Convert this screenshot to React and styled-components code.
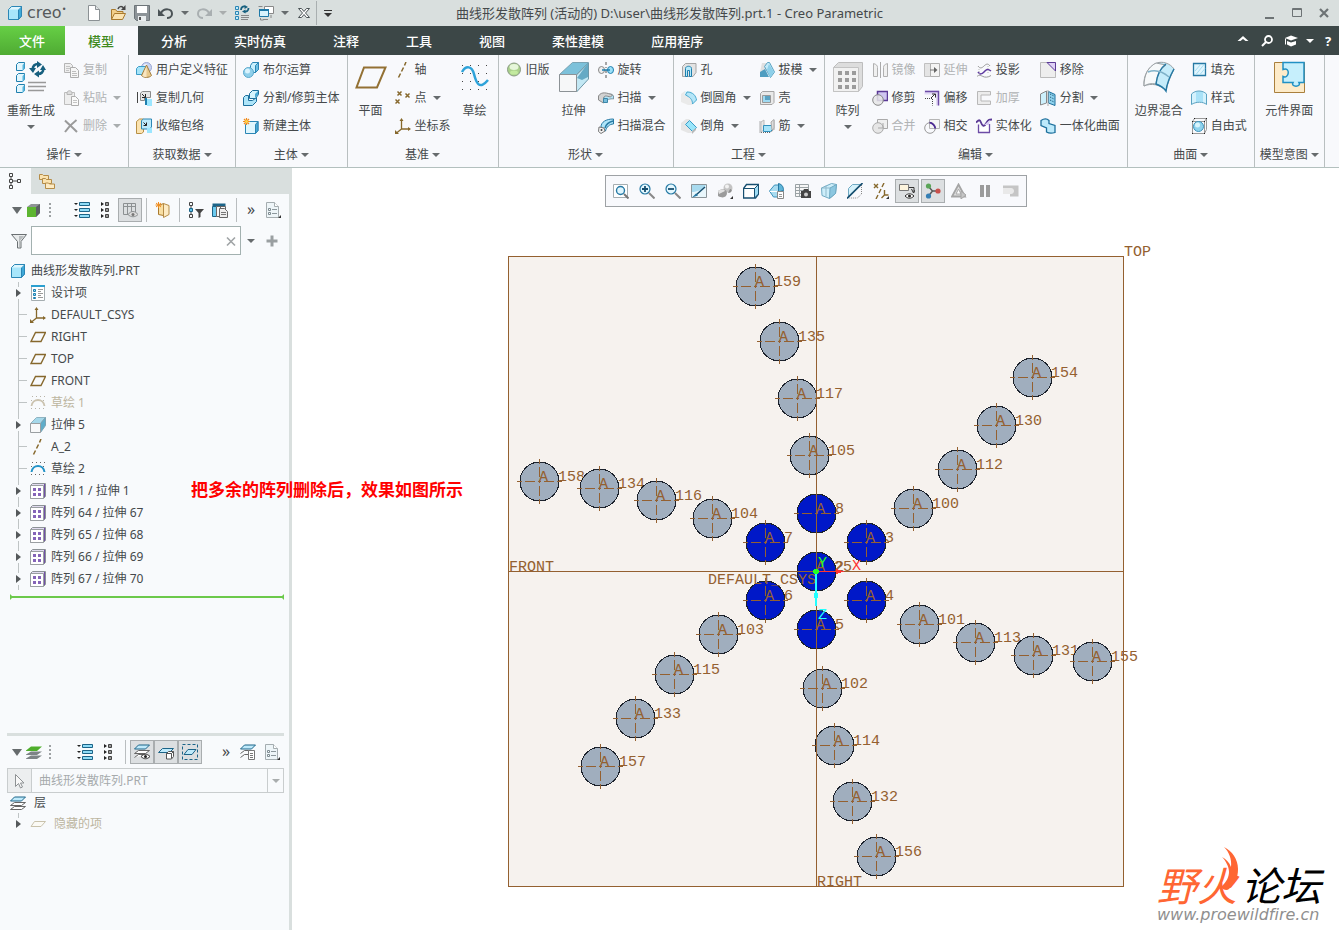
import React from 'react';
import styled, { createGlobalStyle } from 'styled-components';

const icons = {
    part: <><path d="M1.5 4.5l3-3h10v9.500l-3 3.500h-10z" fill="#a8e6fb" stroke="#2b86b5"/><path d="M11.500 4.500l3-3v9.500l-3 3.500z" fill="#3fa9d8" stroke="#2b86b5"/><path d="M2 4.500l3-2.500h9l-2.500 2.500z" fill="#dff6fe"/></>,
    newDoc: <><path d="M2.500 .5h7l4 4v11h-11z" fill="#fff" stroke="#8b9194"/><path d="M9.500 .5v4h4" fill="#dfe3e4" stroke="#8b9194"/></>,
    open: <><path d="M1.500 14.500v-10h4l1.500 2h6v3" fill="#f2cf8a" stroke="#a97a2e"/><path d="M1.500 14.500l3-6h11l-3 6z" fill="#fbe3b0" stroke="#a97a2e"/><path d="M8 4c1-3 4-3 5.500-1" fill="none" stroke="#444" strokeWidth="1.500"/><path d="M15.500 0v5h-4.500z" fill="#444"/></>,
    save: <><path d="M.5 .5h15v15h-13l-2-2z" fill="#8d9498" stroke="#6c7478"/><path d="M3 1h10v7h-10z" fill="#fff"/><path d="M4 11h8v5h-8z" fill="#e9edee"/><path d="M5 12h2v3h-2z" fill="#555"/></>,
    undo: <><path d="M3 8c3-5 11-5 11 1c0 3-3 4-5 4" fill="none" stroke="#4b5356" strokeWidth="2"/><path d="M0 4v7h7z" fill="#4b5356"/></>,
    redo: <><path d="M13 8c-3-5-11-5-11 1c0 3 3 4 5 4" fill="none" stroke="#a9afb1" strokeWidth="2"/><path d="M16 4v7h-7z" fill="#a9afb1"/></>,
    regenSmall: <><path d="M1.500 1.500h3v3h-3zM1.500 6.500h3v3h-3zM1.500 11.500h3v3h-3z" fill="#bfeafb" stroke="#2b86b5"/><path d="M7 10.500h8M7 12.500h8M7 14.500h7" stroke="#888"/><path d="M7 5c0-3 2-4 4-3.500M14.500 3c0 3-2 4-4 3.500" fill="none" stroke="#17607f" strokeWidth="1.800"/><path d="M10.500 0l3.500 2-3.500 2zM11.500 4.500l-3.500 2 3.500 2z" fill="#17607f"/></>,
    windows: <><path d="M6.500 1.500h9v7h-9z" fill="#fff" stroke="#888"/><path d="M1.500 4.500h9v7h-9z" fill="#d8f3fd" stroke="#1f79a8"/><path d="M1 4h10v2h-10z" fill="#1f79a8"/><path d="M5 14.500h5M13 10v3M.5 1.500h4M2.500 13v2h3" stroke="#888" fill="none"/></>,
    closeWin: <path d="M2.500 3.500h3l2.500 3 2.500-3h3l-4 4.500 4 4.500h-3l-2.500-3-2.500 3h-3l4-4.500z" fill="#fff" stroke="#4b5356"/>,
    min: <path d="M3 12h9v2h-9z" fill="#6d7375"/>,
    max: <path d="M3.500 3.500h9v8h-9zM3 4.500h10" fill="none" stroke="#6d7375"/>,
    close: <path d="M4 4l8 8M12 4l-8 8" stroke="#6d7375" strokeWidth="2.200"/>,
    chevronUp: <path d="M8 3l5.500 5h-3l-2.500-2-2.500 2h-3z" fill="#fff"/>,
    search: <><circle cx="9.500" cy="6.500" r="3.500" fill="none" stroke="#fff" strokeWidth="1.800"/><path d="M7 9l-4 4" stroke="#fff" strokeWidth="2"/></>,
    learn: <><path d="M8 2.500l7 2.500-7 2.500-6-2.500z" fill="#fff"/><path d="M4 8l4 1.500 5-1.500v3.500l-5 2-4-2z" fill="#fff"/><path d="M2.500 5.500v6" stroke="#fff"/></>,

    copy: <><path d="M1.500 1.500h6l2 2v7h-8z" fill="#efefef" stroke="#b5b5b5"/><path d="M3 4.500h4M3 6.500h4M3 8.500h3" stroke="#c4c4c4"/><path d="M7.500 5.500h5l3 3v7h-8z" fill="#f6f6f6" stroke="#adadad"/><path d="M9 9.500h4M9 11.500h5M9 13.500h5" stroke="#bdbdbd"/></>,
    paste: <><path d="M1.500 2.500h10v12h-10z" fill="#eee" stroke="#bdbdbd"/><path d="M4 3c0-3 5-3 5 0v1.500h-5z" fill="#ddd" stroke="#b5b5b5"/><path d="M8.500 6.500h4l3 3v6h-7z" fill="#fafafa" stroke="#adadad"/><path d="M10 10.500h4M10 12.500h4" stroke="#c4c4c4"/></>,
    del: <path d="M2 2.500c3 3 7 6.500 12 11.500M13.500 2c-4 3-8 7-11.500 12" stroke="#9a9a9a" strokeWidth="2" fill="none"/>,
    udf: <><circle cx="10.500" cy="5.500" r="5" fill="#c9d4f2" stroke="#98a5d2"/><circle cx="9.500" cy="4" r="2" fill="#eef2fc"/><path d="M.5 6.500l2-2h7v6l-2 2h-7z" fill="#a5e4f9" stroke="#3c9cc8"/><path d="M10.500 3l5 10.500c-2 2.500-8 2.500-10 0z" fill="#e8c98c" stroke="#a07c3e"/><path d="M10.500 4l0 11c-2 0-3.500 0-4-1.500z" fill="#f8e6c2"/></>,
    copyGeom: <><path d="M1.500 2v11" stroke="#444"/><path d="M4.500 3l2-1.500h8v6h-6v3h-4z" fill="#e6e6e6" stroke="#8a8a8a"/><path d="M6 4l2.500 2.500M9.500 4v3.500h-3.500" stroke="#222" fill="none"/><path d="M9 8h2v7h-2z" fill="#1c7fae"/><path d="M11 9h5v7h-5z" fill="#9be6ff"/></>,
    shrink: <><path d="M.5 3.500l3-2.500h4v13l-2 1.500h-5z" fill="#fbe3b0" stroke="#b78f45"/><path d="M5.500 2.500l2-1.500h8v8l-2 2h-8z" fill="#bdeafb" stroke="#2b86b5"/><path d="M7.500 4.500l3 3M10.500 4.500v3h-3" stroke="#222" fill="none"/><path d="M11 10h5v5h-5z" fill="#9be6ff"/></>,
    boole: <><path d="M7.500 3.500l2-3h6v7l-3 3h-5z" fill="#c9f0fd" stroke="#2b86b5"/><path d="M12.500 3.500l3-3v7l-3 3z" fill="#6fc0e2" stroke="#2b86b5"/><circle cx="5.500" cy="10.500" r="5" fill="#8fcfea" stroke="#5aa9cc"/><circle cx="4.500" cy="9" r="2.500" fill="#d9f3fd"/></>,
    splitBody: <><path d="M.5 7.500l2-2h3v5h4l4-3v4l-4 4h-9z" fill="#aee5f9" stroke="#1c6f9c"/><path d="M6.500 3.500l3-3h6v4l-3 4h-6z" fill="#d5f3fd" stroke="#1c6f9c"/><path d="M12 4l3-3v3.500l-3 3.500z" fill="#4aa9d4"/></>,
    newBody: <><path d="M2.500 6.500l3-3h9.500v9l-2.500 3h-10z" fill="#dff6fe" stroke="#2b86b5"/><path d="M12.500 6.500l2.500-3v9l-2.500 3z" fill="#4aa9d4" stroke="#2b86b5"/><path d="M3.500 0v7M0 3.500h7M1 1l5 5M6 1l-5 5" stroke="#f08c1e" strokeWidth="1.200"/><circle cx="3.500" cy="3.500" r="1.500" fill="#ffd54a"/></>,
    axis: <path d="M11 0l-1.500 3.500M8.500 5.500l-2 4M5.500 11.500l-2 4" stroke="#86682c" strokeWidth="1.500"/>,
    point: <path d="M2.500 1.500l4 4M6.500 1.500l-4 4M10.500 3.500l4 4M14.500 3.500l-4 4M.5 9.500l4 4M4.500 9.500l-4 4" stroke="#86682c" strokeWidth="1.500"/>,
    csys: <><path d="M6.500 2v9h8M6.500 11l-5 4" fill="none" stroke="#86682c" strokeWidth="1.300"/><path d="M4.500 3l2-3 2 3zM13 9l3 2-3 2zM0 12v4h4z" fill="#86682c"/></>,
    oldVersion: <><circle cx="8" cy="7.500" r="6.500" fill="#a9d08a" stroke="#8b9b85"/><ellipse cx="8" cy="5" rx="4.500" ry="3" fill="#e6f6da"/><ellipse cx="8" cy="10.500" rx="4" ry="2" fill="#c3ea9f"/></>,
    revolve: <><path d="M8 0v3M8 5v1M8 8v3M8 13v3" stroke="#555"/><ellipse cx="3.500" cy="8" rx="3" ry="3.500" fill="#eee" stroke="#888"/><ellipse cx="12.500" cy="8" rx="3" ry="3.500" fill="#9be0f8" stroke="#1f7fae"/><path d="M4 8h8" stroke="#1f7fae" strokeWidth="1.500"/></>,
    sweep: <><path d="M6 9c3 2 6-1 9.500 0v-3l-2-2c-4 0-6 1-8 1z" fill="#b5e4f6" stroke="#7d97a4"/><path d="M.5 6c3-5 9-3 14-1l-2 2c-4-1-6-2-7 1v5l-5-3z" fill="#d2d2d2" stroke="#8a8a8a"/><path d="M5.500 8.500h4v4h-4z" fill="#78bddb" stroke="#3b86a8"/></>,
    sweepBlend: <><path d="M3 9c0-5 5-8 12.500-8v5c-4 0-7 3-8 7z" fill="#aee5f9" stroke="#2679a4"/><path d="M7 10c1-4 4-6 8-7" stroke="#2679a4" fill="none" strokeWidth="1.500"/><path d="M1 9l5 1 1 3-4 2.500-2.500-2z" fill="#f4f4f4" stroke="#777"/><circle cx="3.500" cy="12" r="1" fill="#444"/></>,
    hole: <><path d="M1.500 4.500l3-3h10.500v9l-3 4h-10.500z" fill="#e3e3e3" stroke="#a5a5a5"/><path d="M4.500 14.500v-8c0-3 6-3 6 0v8h-2v-6h-2v6z" fill="#b5eafb" stroke="#1f7fae"/></>,
    round: <><path d="M0 4l4-3h4c5 1 8 6 7 10l-4 4h-4l-7-3z" fill="#eaeaea"/><path d="M4 1h4c5 1 8 5 7.500 10l-4 3.500c0-5-3-8-8-9z" fill="#e2f5fc"/><path d="M6 2c6 0 9 4 9.500 8l-4 4c0-5-3-7-7-9z" fill="#b5e6f8" stroke="#4ba9d0"/></>,
    chamfer: <><path d="M0 5l5-4h3l8 9-5 5h-4l-7-3z" fill="#e6e6e6"/><path d="M8.500 2.500l7 7-4 4-7-7z" fill="#9be6fb" stroke="#3a9cc8"/><path d="M11 13v3l4-4v-2z" fill="#b9b9b9"/></>,
    draft: <><path d="M3 1h5l-2 9h-5z" fill="#e0e0e0"/><path d="M5.500 4.500l3-4h2l5 9.500-4 5.500z" fill="#c5ebf9" stroke="#5aa2c2"/><path d="M10 2l5 8-4 5.500-3-8z" fill="#8dcfe9"/><path d="M1 10l5-3 4 8h-9z" fill="#4f9dc0"/></>,
    shell: <><path d="M1.500 3.500l2-2h11.500v11l-2 2h-11.500z" fill="#e9e9e9" stroke="#a5a5a5"/><path d="M3.500 5.500h8v7h-8z" fill="#9fdaf2" stroke="#999"/><path d="M6 6h5v4h-5z" fill="#5aa2c2"/></>,
    rib: <><path d="M1 3.500v11h10l4-3v-10" fill="none" stroke="#666" strokeDasharray="1 1"/><path d="M2 4l3-2v10l-3 2z" fill="#e8e8e8" stroke="#bbb"/><path d="M4.500 7.500h8l1-1v5l-2 2h-7z" fill="#a6e4fa" stroke="#3190bd"/><path d="M12 4l3-2.500v9l-2 1.500z" fill="#ddd" stroke="#aaa"/></>,
    mirror: <><path d="M8.500 0v16" stroke="#aaa"/><path d="M1.500 1.500c3 1 4 2 4 4v9h-4zM15.500 1.500c-3 1-4 2-4 4v9h4z" fill="#f0f0f0" stroke="#b0b0b0"/></>,
    extend: <><path d="M.5 1.500h6v13h-6z" fill="#e4e4e4" stroke="#c0c0c0"/><path d="M6.500 1.500h9v13h-9z" fill="#f4f4f4" stroke="#b0b0b0"/><path d="M6 8h6" stroke="#777"/><path d="M10 5l3.500 3-3.500 3z" fill="#666"/></>,
    project: <><path d="M2 4c2 3 4 2 6 0s4-3 6 0M1 14.500c2-2 4-1 6 0s5 1 8-1" fill="none" stroke="#999"/><path d="M2 10c2 3 4 2 6 0s3-4 7-1" fill="none" stroke="#5e3aa0" strokeWidth="1.500"/><path d="M3 7v7M12 4v8" stroke="#b8b8b8" strokeDasharray="1 1"/></>,
    trim: <><path d="M5.500 1.500h10v9h-10z" fill="#cfc6f0" stroke="#5b3a96" strokeWidth="1.500"/><circle cx="6" cy="10" r="5.300" fill="#e6e6e6" fillOpacity=".85" stroke="#888"/></>,
    offset: <><path d="M.5 .5h14.500v15h-3v-11h-11.500z" fill="#e2d9f5"/><path d="M1 1.500h13.500v14" fill="none" stroke="#6c4ba6" strokeWidth="1.500"/><path d="M1 8.500h7.500v7" fill="none" stroke="#444" strokeDasharray="1 1"/><path d="M7 8l4-4M8 4h3.500v3.500" stroke="#333" fill="none"/></>,
    thicken: <path d="M14.500 1.500h-13v13h13v-3.500h-9.500v-6h9.500z" fill="#ececec" stroke="#b8b8b8"/>,
    merge: <><path d="M5.500 1.500h10v9h-10z" fill="#efefef" stroke="#aaa"/><circle cx="6" cy="10" r="5.300" fill="#e6e6e6" stroke="#aaa"/><path d="M6 10h5v-5" fill="none" stroke="#aaa"/></>,
    intersect: <><path d="M5.500 1.500h10v9h-10z" fill="#f5f5f5" stroke="#b5b5b5"/><circle cx="6" cy="10" r="5.300" fill="none" stroke="#999"/><path d="M5.500 4.700c3 0 5.500 3 5.800 5.800" fill="none" stroke="#4c2a94" strokeWidth="1.800"/></>,
    solidify: <><path d="M2.500 7.500c3 2 5 3 6 1l5-5v11h-11z" fill="#fff"/><path d="M2.500 15v-8.500M2 14.500h12M13.500 15v-9" stroke="#6c4ba6" strokeWidth="1.300"/><path d="M0 4.500c3-3 4-3 5 0s3 5 5 1 3-4 6-4" fill="none" stroke="#5b3a96" strokeWidth="1.800"/><path d="M8 7l6-5-1 5z" fill="#d8ccf2"/></>,
    remove: <><path d="M.5 .5h15v15h-15z" fill="#eee" stroke="#bbb"/><path d="M7 .5h8.500v8.500z" fill="#ddd0f5" stroke="#5b3a96"/></>,
    split: <><path d="M.5 4l6-3v12l-6 2z" fill="#cdf0fc" stroke="#888"/><path d="M8.500 1.500l6.500 3v11l-6.500-2.500z" fill="#8fd3ee" stroke="#1c6f9c"/><path d="M10 4l4 2M10 7l4 2M10 10l4 2" stroke="#164f70" strokeDasharray="1 1"/><path d="M8 0v16" stroke="#aaa"/></>,
    unify: <path d="M1 2.500c3-2 6-2 8 0v3l6 2v7c-3 1-6 1-8.500-.5v-4l-5.500-2.500z" fill="#bdeafb" stroke="#1c6f9c" strokeWidth="1.300"/>,
    fill: <><path d="M2.500 1.500h12v12h-12z" fill="#e1f6fe" stroke="#2679a4" strokeWidth="1.300"/><path d="M4 9l6-7M5 12.500l8-10M9 12.500l5-6" stroke="#a5dcf2"/></>,
    style: <><path d="M.5 4c4-4 11-4 15 0v11c-2-3-5-3-7-3s-5 0-8 3z" fill="#d5f2fd"/><path d="M5 2c2-1 5-1 7 .5v10c-2-1-5-1-7 0z" fill="#a9e2f8"/><path d="M.5 14.500v-10.500c4-4 11-4 15 0v10.500c-3-3-11-3-15 0z" fill="none" stroke="#5aa2c2"/></>,
    freestyle: <><path d="M1.500 3.500l2-3h12v11l-2 4h-12zM1.500 3.500h12v12M13.500 3.500l2-3" fill="none" stroke="#999"/><circle cx="7.500" cy="8.500" r="5" fill="#8fd3ee" stroke="#3c92bb"/><circle cx="6.500" cy="7" r="2.500" fill="#d8f4fd"/><path d="M1 3h1v1h-1zM13 3h1v1h-1zM1 15h1v1h-1zM13 15h1v1h-1zM3 0h1v1h-1zM15 0h1v1h-1z" fill="#222"/></>,

    modelTree: <path d="M1.500 .5h3v3h-3zM1.500 6.500h3v3h-3zM1.500 12.500h3v3h-3zM3 4v2M3 10v2M5 8h4M9.500 6.500h3v3h-3z" fill="none" stroke="#444"/>,
    folders: <><path d="M.5 1.500h3l1 1h5v4h-9z" fill="#fbe3b0" stroke="#b58c48"/><path d="M3.500 5.500h3l1 1h5v4h-9z" fill="#fbe3b0" stroke="#b58c48"/><path d="M6.500 10h3l1 1h5v4.500h-9z" fill="#fdebc4" stroke="#b58c48"/></>,
    greenCube: <><path d="M1 5l4-3h9v9l-4 4h-9z" fill="#8f9396"/><path d="M10 5l4-3v9l-4 4z" fill="#5b6063"/><path d="M1 5h9v10h-9z" fill="#5db531"/></>,
    greenLayers: <><path d="M0 14.500l5-3h11l-5 3.500h-11zM0 10.500l5-3h11l-5 3.500h-11z" fill="#7d8386"/><path d="M0 6.500l5-4h11l-5 4.500h-11z" fill="#4fae2c"/></>,
    dots: <path d="M7 1h2v2h-2zM7 5h2v2h-2zM7 9h2v2h-2zM7 13h2v2h-2z" fill="#9da1a3"/>,
    expandList: <><path d="M5.500 .5h10v3h-10zM5.500 6.500h10v3h-10zM5.500 12.500h10v3h-10z" fill="#8fdcf7" stroke="#1c6488"/><path d="M0 1h4l-2 2zM0 7h4l-2 2zM0 13h4l-2 2z" fill="#222"/></>,
    collapseList: <><path d="M7.500 .5h3v3h-3zM7.500 6.500h3v3h-3zM7.500 12.500h3v3h-3z" fill="#999" stroke="#444"/><path d="M3 0l3 2-3 2zM3 6l3 2-3 2zM3 12l3 2-3 2z" fill="#222"/></>,
    columnsEye: <><path d="M1.500 1.500h12v11h-12zM1 4.500h12M5.500 2v11M9.500 2v8" fill="none" stroke="#8c9092"/><path d="M6 12.500c3-4 7-4 10 0c-3 3-7 3-10 0z" fill="#ddd" stroke="#8c9092"/><circle cx="11" cy="12.500" r="1.500" fill="#777"/></>,
    newFolder: <><path d="M3.500 3.500l5-2v12l-5-1z" fill="#f8dfa4" stroke="#a97a2e"/><path d="M8.500 1.500l5.500 2v9l-5.500 3z" fill="#fdebc4" stroke="#b58c48"/><path d="M3.500 0v6M.5 3h6M1 1l5 4M6 1l-5 4" stroke="#f08c1e"/></>,
    treeFilter: <><path d="M1.500 .5h3v3h-3zM1.500 12.500h3v3h-3zM3 4v2M3 10v2" fill="none" stroke="#444"/><path d="M1.500 6.500h3v3h-3z" fill="#5cc3ea" stroke="#1c6488"/><path d="M7 7h9l-3.500 4v4l-2 1v-5z" fill="#444"/></>,
    columnsDoc: <><path d="M.5 1.500h13v3h-13z" fill="#1c6488"/><path d="M.5 4.500h4v10h-4z" fill="#6ccaee" stroke="#1c6488"/><path d="M4.500 4.500h9v10h-9zM8.500 5v9" fill="#f8f8f8" stroke="#666"/><path d="M7.500 6.500h5l3 3v6h-8z" fill="#eee" stroke="#666"/><path d="M9 10.500h5M9 12.500h5" stroke="#777"/></>,
    settingsDoc: <><path d="M1.500 .5h8l4 4v11h-12z" fill="#eef5f8" stroke="#a5adb0"/><path d="M9.500 .5v4h4" fill="#fff" stroke="#a5adb0"/><path d="M3.500 6.500h2v2h-2zM3.500 10.500h2v2h-2z" fill="#fff" stroke="#7d8a90"/><path d="M7 7.500h5M7 11.500h5" stroke="#8c979c"/><path d="M16 13v3h-3z" fill="#333"/></>,
    funnel: <><path d="M.5 1.500h15l-5.500 7v6.500h-3.500v-6.500z" fill="#e9ebec" stroke="#6b7073"/><path d="M8 3h5l-4 5v6h-1z" fill="#b9bdbf"/></>,
    plus: <path d="M6.500 2.500h3v4h4v3h-4v4h-3v-4h-4v-3h4z" fill="#9a9fa1"/>,
    clear: <path d="M4 4.500l8 8M12 4.500l-8 8" stroke="#a0a4a6" strokeWidth="1.600"/>,
    design: <><path d="M1.500 .5h13v15h-13z" fill="#fff" stroke="#a5adb0"/><path d="M1 1h14" stroke="#2b9fd0" strokeWidth="2"/><path d="M3.500 4.500h2v2h-2zM3.500 8.500h2v2h-2zM3.500 12.500h2v1h-2z" fill="#8fdcf7" stroke="#1f7fae"/><path d="M8 4.500h5M8 6.500h3M8 8.500h5M8 10.500h3M8 12.500h5" stroke="#999"/></>,
    plane: <path d="M5.500 3.500h10l-4.500 9h-10z" fill="none" stroke="#86682c" strokeWidth="1.400"/>,
    sketchOff: <><path d="M2 1.500h14M1 5.500h2M13 5.500h2M1 13.500h14" stroke="#b9b4a8" strokeDasharray="1 3"/><path d="M1.500 11c1-8 12-8 13 0" fill="none" stroke="#cbc3b0" strokeWidth="1.800"/></>,
    sketch: <><path d="M2 1.500h14M1 5.500h2M13 5.500h2M1 13.500h14" stroke="#666" strokeDasharray="1 3"/><path d="M1.500 11c1-8 12-8 13 0" fill="none" stroke="#2393c8" strokeWidth="2"/></>,
    extrude: <><path d="M.5 6.500l6-6h9l-5 6z" fill="#a5d8ea" stroke="#8fb3c1"/><path d="M10.500 6.500l5-6v8l-5 7z" fill="#5fadca" stroke="#7aa3b3"/><path d="M.5 6.500h10v9h-10z" fill="#f8f9fa" stroke="#9a9fa2"/></>,
    pattern: <><path d="M.5 2.500l2-2h13v13l-2 2h-13z" fill="#e2dcf0" stroke="#8c9296"/><path d="M.5 2.500h13v13h-13z" fill="#fff" stroke="#9a9fa2"/><path d="M14.500 1v13" stroke="#7350a8"/><path d="M3 5h3v3h-3zM8 5h3v3h-3zM3 10h3v3h-3zM8 10h3v3h-3z" fill="#8564b8"/></>,
    cursor: <path d="M4.500 1.500v12l3-3 2 4.500 2-1-2-4h3.500z" fill="#f8f8f8" stroke="#8d9193"/>,
    layers: <><path d="M.5 14.500l4-3h11l-4 3zM.5 10.500l4-3h11l-4 3z" fill="#fff" stroke="#666"/><path d="M.5 6l4-4h11l-4 4z" fill="#bfeafb" stroke="#1c6488"/></>,
    layerEye: <><path d="M.5 13.500l4-3h7M.5 9.500l4-3h11l-4 3z" fill="#fff" stroke="#666"/><path d="M.5 5l4-4h11l-4 4z" fill="#bfeafb" stroke="#1c6488"/><path d="M7 12.500c3-3 6-3 9 0c-3 3-6 3-9 0z" fill="#fff" stroke="#333"/><circle cx="11.500" cy="12.500" r="1.500" fill="#222"/></>,
    layerCube: <><path d="M.5 8.500l4-4h11l-4 4z" fill="#bfeafb" stroke="#1c6488"/><path d="M8.500 9.500l2-2h5v5l-2 2.500h-5zM8.500 9.500h5v5M13.500 9.500l2-2" fill="#fff" stroke="#555"/></>,
    layerSel: <><path d="M.5 .5h15v15h-15z" fill="none" stroke="#1c6488" strokeDasharray="3 2"/><path d="M2 10.500l4-5h8l-4 5z" fill="#bfeafb" stroke="#1c6488"/></>,
    layerDoc: <><path d="M.5 13.500l4-3h4M.5 9.500l4-3h5" fill="none" stroke="#666"/><path d="M.5 5l4-4h11l-4 4z" fill="#bfeafb" stroke="#1c6488"/><path d="M8.500 6.500h6v9h-6z" fill="#fff" stroke="#777"/><path d="M10 9.500h3M10 11.500h3M10 13.500h3" stroke="#777"/></>,
    planeOff: <path d="M4.500 5.500h11l-4.500 5h-10z" fill="#fbfaf5" stroke="#c9c2ac"/>,

    refit: <><path d="M.5 1.500h14v13h-14z" fill="#fff" stroke="#a5adb0"/><circle cx="7.500" cy="7.500" r="4" fill="#dff5fd" stroke="#2679a4" strokeWidth="1.400"/><path d="M11 11l4.500 4.500" stroke="#777" strokeWidth="2"/></>,
    zoomIn: <><circle cx="6" cy="6" r="5" fill="#e4f7fe" stroke="#2679a4" strokeWidth="1.200"/><path d="M3 6h6M6 3v6" stroke="#174f70" strokeWidth="1.800"/><path d="M10 10l5.500 5.500" stroke="#888" strokeWidth="2"/></>,
    zoomOut: <><circle cx="6" cy="6" r="5" fill="#e4f7fe" stroke="#2679a4" strokeWidth="1.200"/><path d="M3 6h6" stroke="#174f70" strokeWidth="1.800"/><path d="M10 10l5.500 5.500" stroke="#888" strokeWidth="2"/></>,
    repaint: <><path d="M.5 1.500h15v13h-15z" fill="#a9dbef" stroke="#8b9498"/><path d="M1 9c5 0 10-2 14-7v12h-14z" fill="#e9f7fc"/><path d="M5 12l9-8" stroke="#174f70" strokeWidth="1.500"/><path d="M1 14.500l4-4 2 2z" fill="#2679a4"/></>,
    shading: <><circle cx="11" cy="5" r="4.500" fill="#c4c4c4"/><circle cx="10" cy="3.500" r="2" fill="#f2f2f2"/><path d="M13 6c3 0 2 4-2 4l1-2z" fill="#8e8e8e"/><path d="M1 8c4-3 9-2 9 2s-4 6-9 3z" fill="#9b9b9b"/><path d="M1 8c3-2 6-2 7 0l-6 3z" fill="#e2e2e2"/><path d="M16 13v3h-3z" fill="#333"/></>,
    savedView: <><path d="M.5 5.500l3-4h12v9.500l-3 4h-12z" fill="#fff" stroke="#174f70" strokeWidth="1.400"/><path d="M11.500 5.500l4-4v9.500l-4 4z" fill="#9fdcf4" stroke="#174f70"/><path d="M.5 5.500h11v9" fill="none" stroke="#174f70"/></>,
    viewMgr: <><path d="M.5 8l5-6h4v6h5l-4 6h-6z" fill="#a9dcf0" stroke="#3c92bb"/><path d="M9.500 9v-8.500c4 1 5 4 5 7z" fill="#5fb5d8" stroke="#2679a4"/><path d="M1 8.500h8" stroke="#fff"/><path d="M8.500 8.500h6v7h-6z" fill="#fff" stroke="#888"/><path d="M10 11.500h3M10 13.500h3" stroke="#999"/></>,
    snapshot: <><path d="M.5 1.500h13v12h-13zM.5 4.500h13M.5 7.500h13M.5 10.500h13M4.500 2v11" fill="#f6f6f6" stroke="#9aa2a5"/><path d="M6 8h2l1-2h4l1 2h2v7h-10z" fill="#444"/><circle cx="11" cy="11.500" r="2" fill="#ccc"/></>,
    perspective: <><path d="M.5 5l10-4.500 5 1-1 9-6 5-7.500-3z" fill="#cdeefa" stroke="#6fa9c2"/><path d="M9 5l6.500-3.500-1 9-6 5z" fill="#8cc7e0" stroke="#6fa9c2"/><path d="M.5 5h8.500M5 2.500v11" stroke="#8fb9cb"/></>,
    section: <><path d="M1.500 5.500l4-4h9l-13 13z" fill="#d5f1fb" stroke="#6fa9c2"/><path d="M14.500 2v9l-4 4h-8" fill="none" stroke="#888" strokeDasharray="1 1"/><path d="M0 15.500l15.500-15.500" stroke="#174f70" strokeWidth="1.600"/></>,
    datum: <><path d="M1 1l4 4M5 1l-4 4M11 0l-2 4M8 6l-2 4M5 12l-2 4M11.500 7v5h4M11.500 12l-3 3" stroke="#86682c" strokeWidth="1.400" fill="none"/><path d="M16 13v3h-3z" fill="#333"/></>,
    annot: <><path d="M.5 1.500h9v6h-9z" fill="#fdf4dd" stroke="#777"/><path d="M10 4.500h5v5M12.500 6l2 4 1.500-3" fill="none" stroke="#333"/><path d="M6 13c3-3 6-3 9 0c-3 3-6 3-9 0z" fill="#fff" stroke="#333"/><circle cx="10.500" cy="13" r="1.500" fill="#222"/></>,
    spin: <><path d="M3.500 3.500l4 4.500h6M7.500 8l-4 5" stroke="#555" fill="none" strokeWidth="1.400"/><circle cx="3.500" cy="3" r="2.600" fill="#5aa558"/><circle cx="13" cy="8" r="2.600" fill="#c9504c"/><circle cx="3.500" cy="13" r="2.600" fill="#347fb5"/></>,
    simulate: <><path d="M7.500 1.500l6.500 12h-13z" fill="#ddd" stroke="#a5a5a5" strokeWidth="1.800"/><path d="M7.500 6l2.500 5h-5z" fill="#fff" stroke="#aaa"/><path d="M10 8l5 4-5 4z" fill="#c5c5c5" stroke="#a5a5a5"/></>,
    pause: <path d="M3 2h4v12h-4zM9 2h4v12h-4z" fill="#9b9b9b"/>,
    stage: <><path d="M0 2.500h15.500v11h-15.500z" fill="#c5c5c5"/><path d="M0 5h8c4 0 4 6 0 6h-8z" fill="#e9e9e9"/><path d="M0 11h7v3h-7z" fill="#f8f9fc"/></>,
};

const bigIcons = {
    regen: <><path d="M1.500 3.500l2-2h6v6l-2 2h-6zM1.500 14.500l2-2h6v6l-2 2h-6zM1.500 25.500l2-2h6v6l-2 2h-6z" fill="#e2f6fd" stroke="#1f7fae"/><path d="M7.500 4l2-2v6l-2 2zM7.500 15l2-2v6l-2 2zM7.500 26l2-2v6l-2 2z" fill="#58b6dd"/><path d="M13 21.500h18M13 25.500h18M13 29.500h16" stroke="#999" strokeWidth="1.500"/><path d="M18 9c-1-4 2-6 5-6M28 7c1 4-2 6-5 6" fill="none" stroke="#17607f" strokeWidth="2.500"/><path d="M22 0l5 3.500-5 3.500zM24 9.500l-5 3.500 5 3.500zM14 7l4 5 3-5zM25 9l3-5 3 5z" fill="#17607f"/></>,
    plane: <path d="M9 6.500h21.500l-8.500 20h-20.500z" fill="none" stroke="#937134" strokeWidth="2"/>,
    sketch: <><path d="M3 4.500h26M3 12.500h26M3 20.500h26M3 28.500h26" stroke="#444" strokeDasharray="1 7"/><path d="M3 11c4-7 10-6 12 2s5 17 14 6" fill="none" stroke="#2fa3d9" strokeWidth="2.500"/></>,
    extrude: <><path d="M1.500 13.500l13-12h16l-12 12z" fill="#7cc1da" stroke="#7aa3b3"/><path d="M18.500 14l12-12v16l-12 13z" fill="#c3e8f4" stroke="#6e98a8"/><path d="M19 17l11-15v14l-6 3z" fill="#65aac5"/><path d="M1.500 13.500h17v17h-17z" fill="#f6f7f8" stroke="#8c9296"/></>,
    pattern: <><path d="M1.500 6.500l5-5h24v24l-4 5h-25z" fill="#ddd" stroke="#bdbdbd"/><path d="M1.500 6.500h25v24h-25z" fill="#f1f1f1" stroke="#c3c3c3"/><path d="M6 10h4v4h-4zM13 10h4v4h-4zM20 10h4v4h-4zM6 17h4v4h-4zM13 17h4v4h-4zM20 17h4v4h-4zM6 24h4v4h-4zM13 24h4v4h-4zM20 24h4v4h-4z" fill="#9b9b9b"/></>,
    boundary: <><path d="M1 25c-1-11 5-20 13-23c5-2 13 0 17 6c-3 7-7 14-8 22c-6-7-15-8-22-5z" fill="#c5ecfa" stroke="#9a9fa2"/><path d="M1 25c0-11 4-19 12-23l10 2c-7 5-9 11-10 19c-5-1-9 0-12 2z" fill="#f7f9fa" stroke="#9a9fa2"/><path d="M23 3c-7 5-9 12-10 20c5 2 8 4 10 7c1-8 4-15 8-22" fill="none" stroke="#2579a4" strokeWidth="1.500"/><path d="M5 11c8-3 15 0 21 5" fill="none" stroke="#7fb2c9" strokeWidth="1.500"/></>,
    component: <><path d="M1.500 1.500h30v30h-30z" fill="#fdebc9" stroke="#a97f3c"/><path d="M10 1.500h21v20h-5c3 5-9 5-6 0h-10v-6c6 3 8-10 0-7z" fill="#c6effc" stroke="#2090c4" strokeWidth="1.500"/></>,
};

const Icon = ({name, size = 16}) => (
    <IconSvg width={size} height={size} viewBox={`0 0 ${size} ${size}`} aria-hidden="true">
        {size === 32 ? bigIcons[name] : icons[name]}
    </IconSvg>
)

// [icon, label, hasArrow, disabled]
const ribbonGroups = [
    {title: '操作', parts: [
        {big: 'regen', label: '重新生成', arrow: true},
        {items: [['copy', '复制', false, true], ['paste', '粘贴', true, true], ['del', '删除', true, true]]},
    ]},
    {title: '获取数据', parts: [
        {items: [['udf', '用户定义特征'], ['copyGeom', '复制几何'], ['shrink', '收缩包络']]},
    ]},
    {title: '主体', parts: [
        {items: [['boole', '布尔运算'], ['splitBody', '分割/修剪主体'], ['newBody', '新建主体']]},
    ]},
    {title: '基准', parts: [
        {big: 'plane', label: '平面'},
        {items: [['axis', '轴'], ['point', '点', true], ['csys', '坐标系']]},
        {big: 'sketch', label: '草绘'},
    ]},
    {title: '形状', parts: [
        {items: [['oldVersion', '旧版']]},
        {big: 'extrude', label: '拉伸'},
        {items: [['revolve', '旋转'], ['sweep', '扫描', true], ['sweepBlend', '扫描混合']]},
    ]},
    {title: '工程', parts: [
        {items: [['hole', '孔'], ['round', '倒圆角', true], ['chamfer', '倒角', true]]},
        {items: [['draft', '拔模', true], ['shell', '壳'], ['rib', '筋', true]]},
    ]},
    {title: '编辑', parts: [
        {big: 'pattern', label: '阵列', arrow: true},
        {items: [['mirror', '镜像', false, true], ['trim', '修剪'], ['merge', '合并', false, true]]},
        {items: [['extend', '延伸', false, true], ['offset', '偏移'], ['intersect', '相交']]},
        {items: [['project', '投影'], ['thicken', '加厚', false, true], ['solidify', '实体化']]},
        {items: [['remove', '移除'], ['split', '分割', true], ['unify', '一体化曲面']]},
    ]},
    {title: '曲面', parts: [
        {big: 'boundary', label: '边界混合'},
        {items: [['fill', '填充'], ['style', '样式'], ['freestyle', '自由式']]},
    ]},
    {title: '模型意图', parts: [
        {big: 'component', label: '元件界面'},
    ]},
];

const tabs = ['模型', '分析', '实时仿真', '注释', '工具', '视图', '柔性建模', '应用程序'];

const tree = [
    {icon: 'design', name: '设计项', open: true},
    {icon: 'csys', name: 'DEFAULT_CSYS'},
    {icon: 'plane', name: 'RIGHT'},
    {icon: 'plane', name: 'TOP'},
    {icon: 'plane', name: 'FRONT'},
    {icon: 'sketchOff', name: '草绘 1', hidden: true},
    {icon: 'extrude', name: '拉伸 5', open: true},
    {icon: 'axis', name: 'A_2'},
    {icon: 'sketch', name: '草绘 2'},
    {icon: 'pattern', name: '阵列 1 / 拉伸 1', open: true},
    {icon: 'pattern', name: '阵列 64 / 拉伸 67', open: true},
    {icon: 'pattern', name: '阵列 65 / 拉伸 68', open: true},
    {icon: 'pattern', name: '阵列 66 / 拉伸 69', open: true},
    {icon: 'pattern', name: '阵列 67 / 拉伸 70', open: true},
];

const viewTools = [
    ['refit', '重新调整'], ['zoomIn', '放大'], ['zoomOut', '缩小'], ['repaint', '重画'],
    ['shading', '显示样式'], ['savedView', '已保存方向'], ['viewMgr', '视图管理器'], ['snapshot', '快照'],
    ['perspective', '透视图'], ['section', '截面'], ['datum', '基准显示'], ['annot', '注释显示', true],
    ['spin', '旋转中心', true], ['simulate', '仿真'], ['pause', '暂停'], ['stage', '停止'],
];

const holes = [
    [755, 286, '159'], [779, 341, '135'], [797, 398, '117'], [809, 455, '105'],
    [1032, 377, '154'], [996, 425, '130'], [957, 469, '112'], [913, 508, '100'],
    [539, 481, '158'], [599, 488, '134'], [656, 500, '116'], [712, 518, '104'],
    [718, 634, '103'], [674, 674, '115'], [635, 718, '133'], [600, 766, '157'],
    [822, 688, '102'], [834, 745, '114'], [852, 801, '132'], [876, 856, '156'],
    [919, 624, '101'], [975, 642, '113'], [1033, 655, '131'], [1092, 661, '155'],
];

const seeds = [
    [816, 513, '8'], [765, 542, '7'], [866, 542, '3'], [816, 571, '2'],
    [765, 600, '6'], [866, 600, '4'], [816, 629, '5'],
];

const Hole = ({x, y, label, fill}) => (
    <g>
        <circle cx={x + 0.5} cy={y + 0.5} r="19.5" fill={fill} stroke="#1c222c" />
        <path d={`M${x - 22} ${y + 0.5}h5m3 0h10m3 0h3m3 0h10m3 0h5M${x + 0.5} ${y - 22}v5m0 3v10m0 3v3m0 3v10m0 3v5`} stroke="#946030" fill="none" />
        <text x={x} y={y}>A</text>
        <text x={x + 19} y={y}>{label}</text>
    </g>
)

const Model = () => (
    <Drawing width="680" height="700" viewBox="476 216 680 700">
        <rect x="508.5" y="256.5" width="615" height="630" fill="#f6f2ee" stroke="#946030" />
        {holes.map(([x, y, label]) => <Hole key={label} x={x} y={y} label={label} fill="#a0aebe" />)}
        {seeds.map(([x, y, label]) => <Hole key={label} x={x} y={y} label={label} fill="#0018c8" />)}
        <path d="M508 571.5h615M816.5 256v630" stroke="#946030" />
        <text x="834" y="571">25</text>
        <text x="1124" y="256">TOP</text>
        <text x="509" y="571">FRONT</text>
        <text x="817" y="886">RIGHT</text>
        <text x="708" y="584">DEFAULT_CSYS</text>
        <path d="M816 571.5h22" stroke="#f33" />
        <path d="M836 569l8 2.500-8 2.500z" fill="#f33" />
        <path d="M816 572v34" stroke="#2ff" strokeWidth="2" />
        <path d="M813.500 593h5l-2.500 12z" fill="#2ff" />
        <circle cx="816" cy="571.5" r="3" fill="#2f2" />
        <AxisName x="852" y="570" $color="#f33">X</AxisName>
        <AxisName x="818" y="567" $color="#2f2">Y</AxisName>
        <AxisName x="818" y="619" $color="#2ff">Z</AxisName>
    </Drawing>
)

const Branch = ({open, short}) => (
    <IconSvg width="23" height="22" viewBox="0 0 23 22" aria-hidden="true">
        {open
            ? <><path d={short ? 'M11.500 0v5' : 'M11.500 0v5M11.500 17v5'} stroke="#bfc4c5" /><path d="M9 7v8l5-4z" fill="#55595b" /></>
            : <path d="M11.500 0v22M12 10.500h8" stroke="#bfc4c5" />}
    </IconSvg>
)

const Ribbon = () => (
    <RibbonBar>
        {ribbonGroups.map((group) => (
            <Group key={group.title}>
                <GroupBody>
                    {group.parts.map((part, i) => part.big ? (
                        <BigButton key={i}>
                            <Icon name={part.big} size={32} />
                            <span>{part.label}</span>
                            {part.arrow && <Arrow />}
                        </BigButton>
                    ) : (
                        <Column key={i}>
                            {part.items.map(([icon, label, arrow, disabled]) => (
                                <SmallButton key={label} disabled={disabled}>
                                    <Icon name={icon} />
                                    <span>{label}</span>
                                    {arrow && <Arrow $faded={disabled} $gap={2} />}
                                </SmallButton>
                            ))}
                        </Column>
                    ))}
                </GroupBody>
                <GroupTitle>{group.title}<Arrow /></GroupTitle>
            </Group>
        ))}
    </RibbonBar>
)

const App = () => (
    <Page>
        <GlobalStyle />
        <TitleBar>
            <QuickAccess>
                <Brand><Icon name="part" /><BrandName>creo<sup>•</sup></BrandName></Brand>
                <ToolButton aria-label="新建"><Icon name="newDoc" /></ToolButton>
                <ToolButton aria-label="打开"><Icon name="open" /></ToolButton>
                <ToolButton aria-label="保存"><Icon name="save" /></ToolButton>
                <ToolButton aria-label="撤消"><Icon name="undo" /></ToolButton>
                <ToolButton $w={14} aria-label="撤消列表"><Arrow /></ToolButton>
                <ToolButton aria-label="重做"><Icon name="redo" /></ToolButton>
                <ToolButton $w={14} aria-label="重做列表"><Arrow $faded /></ToolButton>
                <ToolButton aria-label="重新生成模型"><Icon name="regenSmall" /></ToolButton>
                <ToolButton aria-label="窗口"><Icon name="windows" /></ToolButton>
                <ToolButton $w={14} aria-label="窗口列表"><Arrow /></ToolButton>
                <ToolButton aria-label="关闭文件"><Icon name="closeWin" /></ToolButton>
                <BarLine />
                <ToolButton $w={22} aria-label="自定义"><CustomizeMark><Arrow $dark /></CustomizeMark></ToolButton>
            </QuickAccess>
            <Title>曲线形发散阵列 (活动的) D:\user\曲线形发散阵列.prt.1 - Creo Parametric</Title>
            <WindowButtons>
                <ToolButton $w={27} aria-label="最小化"><Icon name="min" /></ToolButton>
                <ToolButton $w={27} aria-label="最大化"><Icon name="max" /></ToolButton>
                <ToolButton $w={27} aria-label="关闭"><Icon name="close" /></ToolButton>
            </WindowButtons>
        </TitleBar>
        <TabBar>
            <FileTab>文件</FileTab>
            {tabs.map((tab, i) => <Tab key={tab} $active={i === 0}>{tab}</Tab>)}
            <TabTools>
                <ToolButton aria-label="折叠功能区"><Icon name="chevronUp" /></ToolButton>
                <ToolButton aria-label="搜索"><Icon name="search" /></ToolButton>
                <ToolButton aria-label="学习"><Icon name="learn" /></ToolButton>
                <ToolButton $w={14} aria-label="学习列表"><Arrow $light /></ToolButton>
                <HelpButton $w={22}>?</HelpButton>
            </TabTools>
        </TabBar>
        <Ribbon />
        <Workspace>
            <SidePanel>
                <PanelTabs>
                    <PanelTab $active aria-label="模型树"><Icon name="modelTree" /></PanelTab>
                    <PanelTab aria-label="文件夹浏览器"><Icon name="folders" /></PanelTab>
                </PanelTabs>
                <PanelToolbar>
                    <PanelMenu aria-label="模型树菜单"><BigArrow /><Icon name="greenCube" /></PanelMenu>
                    <Icon name="dots" />
                    <ToolSet $push={12}>
                        <ToolButton aria-label="全部展开"><Icon name="expandList" /></ToolButton>
                        <ToolButton aria-label="全部折叠"><Icon name="collapseList" /></ToolButton>
                        <ToolButton $pressed aria-label="列显示"><Icon name="columnsEye" /></ToolButton>
                        <ToolLine />
                        <ToolButton aria-label="新建组"><Icon name="newFolder" /></ToolButton>
                        <ToolLine />
                        <ToolButton aria-label="树过滤器"><Icon name="treeFilter" /></ToolButton>
                        <ToolButton aria-label="树列"><Icon name="columnsDoc" /></ToolButton>
                        <ToolLine />
                        <MoreButton $w={20}>»</MoreButton>
                        <ToolButton aria-label="设置"><Icon name="settingsDoc" /></ToolButton>
                    </ToolSet>
                </PanelToolbar>
                <SearchRow>
                    <Icon name="funnel" />
                    <SearchBox>
                        <SearchInput type="text" aria-label="过滤模型树" />
                        <ToolButton $w={18} aria-label="清除"><Icon name="clear" /></ToolButton>
                    </SearchBox>
                    <ToolButton $w={19} aria-label="过滤选项"><Arrow /></ToolButton>
                    <ToolButton aria-label="添加"><Icon name="plus" /></ToolButton>
                </SearchRow>
                <Tree>
                    <TreeRow $root><Icon name="part" /><span>曲线形发散阵列.PRT</span></TreeRow>
                    {tree.map((item) => (
                        <TreeRow key={item.name} $hidden={item.hidden}>
                            <Branch open={item.open} />
                            <Icon name={item.icon} />
                            <span>{item.name}</span>
                        </TreeRow>
                    ))}
                </Tree>
                <InsertLine />
                <LayerPane>
                    <PanelToolbar>
                        <PanelMenu aria-label="层树菜单"><BigArrow /><Icon name="greenLayers" /></PanelMenu>
                        <Icon name="dots" />
                        <ToolSet $push={15}>
                            <ToolButton aria-label="展开层"><Icon name="expandList" /></ToolButton>
                            <ToolButton aria-label="折叠层"><Icon name="collapseList" /></ToolButton>
                            <ToolLine />
                            <ToolButton $pressed aria-label="显示层"><Icon name="layerEye" /></ToolButton>
                            <ToolButton $pressed aria-label="层项"><Icon name="layerCube" /></ToolButton>
                            <ToolButton $pressed aria-label="选择层"><Icon name="layerSel" /></ToolButton>
                        </ToolSet>
                        <ToolSet $end>
                            <MoreButton $w={20}>»</MoreButton>
                            <ToolButton aria-label="层操作"><Icon name="layerDoc" /></ToolButton>
                            <ToolButton aria-label="层设置"><Icon name="settingsDoc" /></ToolButton>
                        </ToolSet>
                    </PanelToolbar>
                    <LayerPicker>
                        <PickButton aria-label="选取模型" disabled><Icon name="cursor" /></PickButton>
                        <LayerSelect aria-label="当前模型" disabled><option>曲线形发散阵列.PRT</option></LayerSelect>
                        <PickerArrow><Arrow $faded /></PickerArrow>
                    </LayerPicker>
                    <LayerRow><Icon name="layers" /><span>层</span></LayerRow>
                    <TreeRow $hidden $wide><Branch open short /><Icon name="planeOff" /><span>隐藏的项</span></TreeRow>
                </LayerPane>
            </SidePanel>
            <Canvas>
                <ViewBar>
                    {viewTools.map(([icon, label, pressed]) => (
                        <ToolButton key={icon} $pressed={pressed} aria-label={label}><Icon name={icon} /></ToolButton>
                    ))}
                </ViewBar>
                <Model />
                <Watermark>
                    <Flame width="24" height="44" viewBox="0 0 24 44" aria-hidden="true">
                        <path d="M6 0c8 4 14 12 14 22c0 9-3 14-9 20c-2 2-6 1-8-2c6-5 8-11 8-15c0-5-3-11-7-15c4 2 7 5 9 10c1-8-2-15-7-20z" fill="#ff6633" />
                    </Flame>
                    <WatermarkName><Fire>野火</Fire>论坛</WatermarkName>
                    <WatermarkUrl>www.proewildfire.cn</WatermarkUrl>
                </Watermark>
            </Canvas>
            <Note>把多余的阵列删除后，效果如图所示</Note>
        </Workspace>
    </Page>
)

const GlobalStyle = createGlobalStyle`
    *{ box-sizing:border-box; }
    body{
        margin:0;
        background:#fff;
        color:#45494b;
        font:12px/16px "Noto Sans", "Noto Sans CJK SC", sans-serif;
    }
    button, input, select{
        font:inherit;
        color:inherit;
    }
    button{
        padding:0;
        border:0;
        background:none;
    }
`
const Page = styled.div`
    display:flex;
    flex-direction:column;
    min-height:100vh;
    overflow:hidden;
`
const IconSvg = styled.svg`
    display:block;
    flex:none;
`
const Arrow = styled.i`
    flex:none;
    margin-left:${({$gap}) => $gap || 0}px;
    border:4px solid transparent;
    border-top-color:${({$faded, $light, $dark}) => $light ? '#fff' : $faded ? '#a9adae' : $dark ? '#333' : '#666b6d'};
    border-bottom:0;
`
const BigArrow = styled(Arrow)`
    border-width:7px 5px 0;
`
const CustomizeMark = styled.span`
    display:flex;
    padding-top:2px;
    border-top:1px solid #333;
`
const ToolButton = styled.button`
    display:flex;
    flex:none;
    align-items:center;
    justify-content:center;
    width:${({$w}) => $w || 24}px;
    height:24px;
    border:${({$pressed}) => $pressed ? '1px solid #a9adaf' : '0'};
    background:${({$pressed}) => $pressed ? '#dcdfe1' : 'none'};
`
const TitleBar = styled.header`
    display:grid;
    grid-template-columns:1fr auto 1fr;
    align-items:center;
    height:26px;
    background:#d9dfde;
`
const QuickAccess = styled.div`
    display:flex;
    align-items:center;
`
const Brand = styled.div`
    display:flex;
    flex:none;
    align-items:center;
    gap:4px;
    width:82px;
    padding-left:7px;
`
const BrandName = styled.span`
    font:16px/20px "DejaVu Sans", sans-serif;
    color:#55595b;
    sup{
        font-size:8px;
        line-height:8px;
    }
`
const BarLine = styled.div`
    width:1px;
    height:24px;
    background:#a9afb0;
`
const Title = styled.h1`
    margin:0;
    font-size:13px;
    line-height:20px;
    font-weight:400;
    white-space:nowrap;
`
const WindowButtons = styled.div`
    display:flex;
    justify-content:flex-end;
    padding-right:2px;
`
const TabBar = styled.nav`
    display:flex;
    height:29px;
    background:#3c4747;
    font-size:13px;
`
const Tab = styled.button`
    padding:0 24px 0 23px;
    background:${({$active}) => $active ? '#f8f9fc' : 'none'};
    color:${({$active}) => $active ? '#3f8a1d' : '#fff'};
    font-weight:500;
    white-space:nowrap;
`
const FileTab = styled(Tab)`
    padding:0 20px 0 19px;
    background:linear-gradient(#66cf45, #4fab33);
`
const TabTools = styled.div`
    display:flex;
    align-items:center;
    margin-left:auto;
`
const HelpButton = styled(ToolButton)`
    color:#fff;
    font-weight:700;
`
const RibbonBar = styled.div`
    display:flex;
    border-bottom:1px solid #b3c0be;
    background:#f8f9fc;
`
const Group = styled.section`
    display:flex;
    flex:none;
    flex-direction:column;
    border-right:1px solid #b9bfc0;
`
const GroupBody = styled.div`
    display:flex;
    justify-content:center;
    gap:8px;
    height:85px;
    padding:1px 7px 0;
`
const GroupTitle = styled.div`
    display:flex;
    align-items:center;
    justify-content:center;
    gap:3px;
    height:27px;
    padding:2px 5px 0;
`
const BigButton = styled.button`
    display:flex;
    flex-direction:column;
    align-items:center;
    min-width:32px;
    padding-top:5px;
    span{
        margin:10px 0 6px;
        white-space:nowrap;
    }
`
const Column = styled.div`
    display:flex;
    flex-direction:column;
`
const SmallButton = styled.button`
    display:flex;
    align-items:center;
    gap:4px;
    height:28px;
    color:${({disabled}) => disabled ? '#b0b3b4' : 'inherit'};
    white-space:nowrap;
`
const Workspace = styled.main`
    position:relative;
    display:flex;
    flex:1;
`
const SidePanel = styled.aside`
    display:flex;
    flex:none;
    flex-direction:column;
    width:292px;
    border-right:3px solid #d9dfde;
    background:#f8fafc;
`
const PanelTabs = styled.div`
    display:flex;
    height:26px;
    background:#d9dfde;
`
const PanelTab = styled.button`
    display:flex;
    align-items:center;
    justify-content:center;
    width:31px;
    background:${({$active}) => $active ? '#f8fafc' : 'none'};
`
const PanelToolbar = styled.div`
    display:flex;
    align-items:center;
    height:32px;
    padding:0 5px 0 12px;
`
const PanelMenu = styled.button`
    display:flex;
    align-items:center;
    gap:4px;
`
const ToolSet = styled.div`
    display:flex;
    align-items:center;
    margin-left:${({$end, $push}) => $end ? 'auto' : `${$push}px`};
`
const ToolLine = styled.div`
    width:1px;
    height:24px;
    margin:0 4px;
    background:#b9bdbf;
`
const MoreButton = styled(ToolButton)`
    padding-bottom:3px;
    font-size:16px;
`
const SearchRow = styled.div`
    display:flex;
    align-items:center;
    padding-left:11px;
`
const SearchBox = styled.div`
    display:flex;
    align-items:center;
    width:210px;
    height:29px;
    margin-left:4px;
    border:1px solid #a3b1b0;
    background:#fff;
`
const SearchInput = styled.input`
    flex:1;
    min-width:0;
    padding:0 6px;
    border:0;
    background:none;
`
const Tree = styled.div`
    padding-top:5px;
`
const TreeRow = styled.div`
    display:flex;
    align-items:center;
    height:22px;
    padding-left:${({$root}) => $root ? 10 : 7}px;
    color:${({$hidden}) => $hidden ? '#bcb59f' : 'inherit'};
    white-space:nowrap;
    span{
        margin-left:${({$wide}) => $wide ? 8 : 5}px;
    }
`
const InsertLine = styled.div`
    display:flex;
    align-items:center;
    justify-content:space-between;
    height:2px;
    margin:6px 5px 0 10px;
    background:#6cc94b;
    &::before, &::after{
        content:'';
        border:3px solid transparent;
        border-left-color:#6cc94b;
    }
    &::after{
        border-left-color:transparent;
        border-right-color:#6cc94b;
    }
`
const LayerPane = styled.div`
    height:197px;
    margin-top:auto;
    &::before{
        content:'';
        display:block;
        height:3px;
        margin:0 5px 0 7px;
        background:#d9dfde;
    }
`
const LayerPicker = styled.div`
    position:relative;
    display:flex;
    height:25px;
    margin:0 5px 0 7px;
    border:1px solid #c9cdce;
`
const PickButton = styled.button`
    width:24px;
    padding-left:3px;
    border-right:1px solid #c9cdce;
    background:#eceeef;
`
const LayerSelect = styled.select`
    appearance:none;
    flex:1;
    padding:0 24px 0 7px;
    border:0;
    border-radius:0;
    background:#f8fafc;
    color:#a6aaac;
    opacity:1;
`
const PickerArrow = styled.span`
    position:absolute;
    top:0;
    right:0;
    display:flex;
    align-items:center;
    justify-content:center;
    width:16px;
    height:100%;
    border-left:1px solid #c9cdce;
    pointer-events:none;
`
const LayerRow = styled.div`
    display:flex;
    align-items:center;
    gap:8px;
    height:20px;
    padding-left:10px;
`
const Canvas = styled.section`
    position:relative;
    display:flex;
    flex:1;
    flex-direction:column;
    align-items:center;
    min-width:0;
    padding:7px 0 0 1px;
    background:#fff;
`
const ViewBar = styled.div`
    display:flex;
    align-items:center;
    gap:2px;
    height:32px;
    padding:0 3px;
    border:1px solid #9ea2a5;
    background:#f8f9fc;
`
const Drawing = styled.svg`
    display:block;
    flex:none;
    margin-top:9px;
    font:15px "Liberation Mono", monospace;
    fill:#946030;
    shape-rendering:crispEdges;
`
const AxisName = styled.text`
    fill:${({$color}) => $color};
`
const Note = styled.p`
    position:absolute;
    top:311px;
    left:191px;
    margin:0;
    color:#f00;
    font:700 17px/20px "Noto Sans CJK SC", sans-serif;
    white-space:nowrap;
`
const Watermark = styled.div`
    position:absolute;
    right:18px;
    bottom:6px;
`
const Flame = styled.svg`
    position:absolute;
    left:61px;
    top:-15px;
`
const WatermarkName = styled.div`
    color:#000;
    font:italic 400 40px/44px "Noto Sans CJK SC", sans-serif;
`
const Fire = styled.span`
    margin-right:4px;
    color:#ff6633;
`
const WatermarkUrl = styled.div`
    color:#8f8f8f;
    font:italic 16px/18px "DejaVu Sans", sans-serif;
    font-variant-ligatures:none;
`

export default App
